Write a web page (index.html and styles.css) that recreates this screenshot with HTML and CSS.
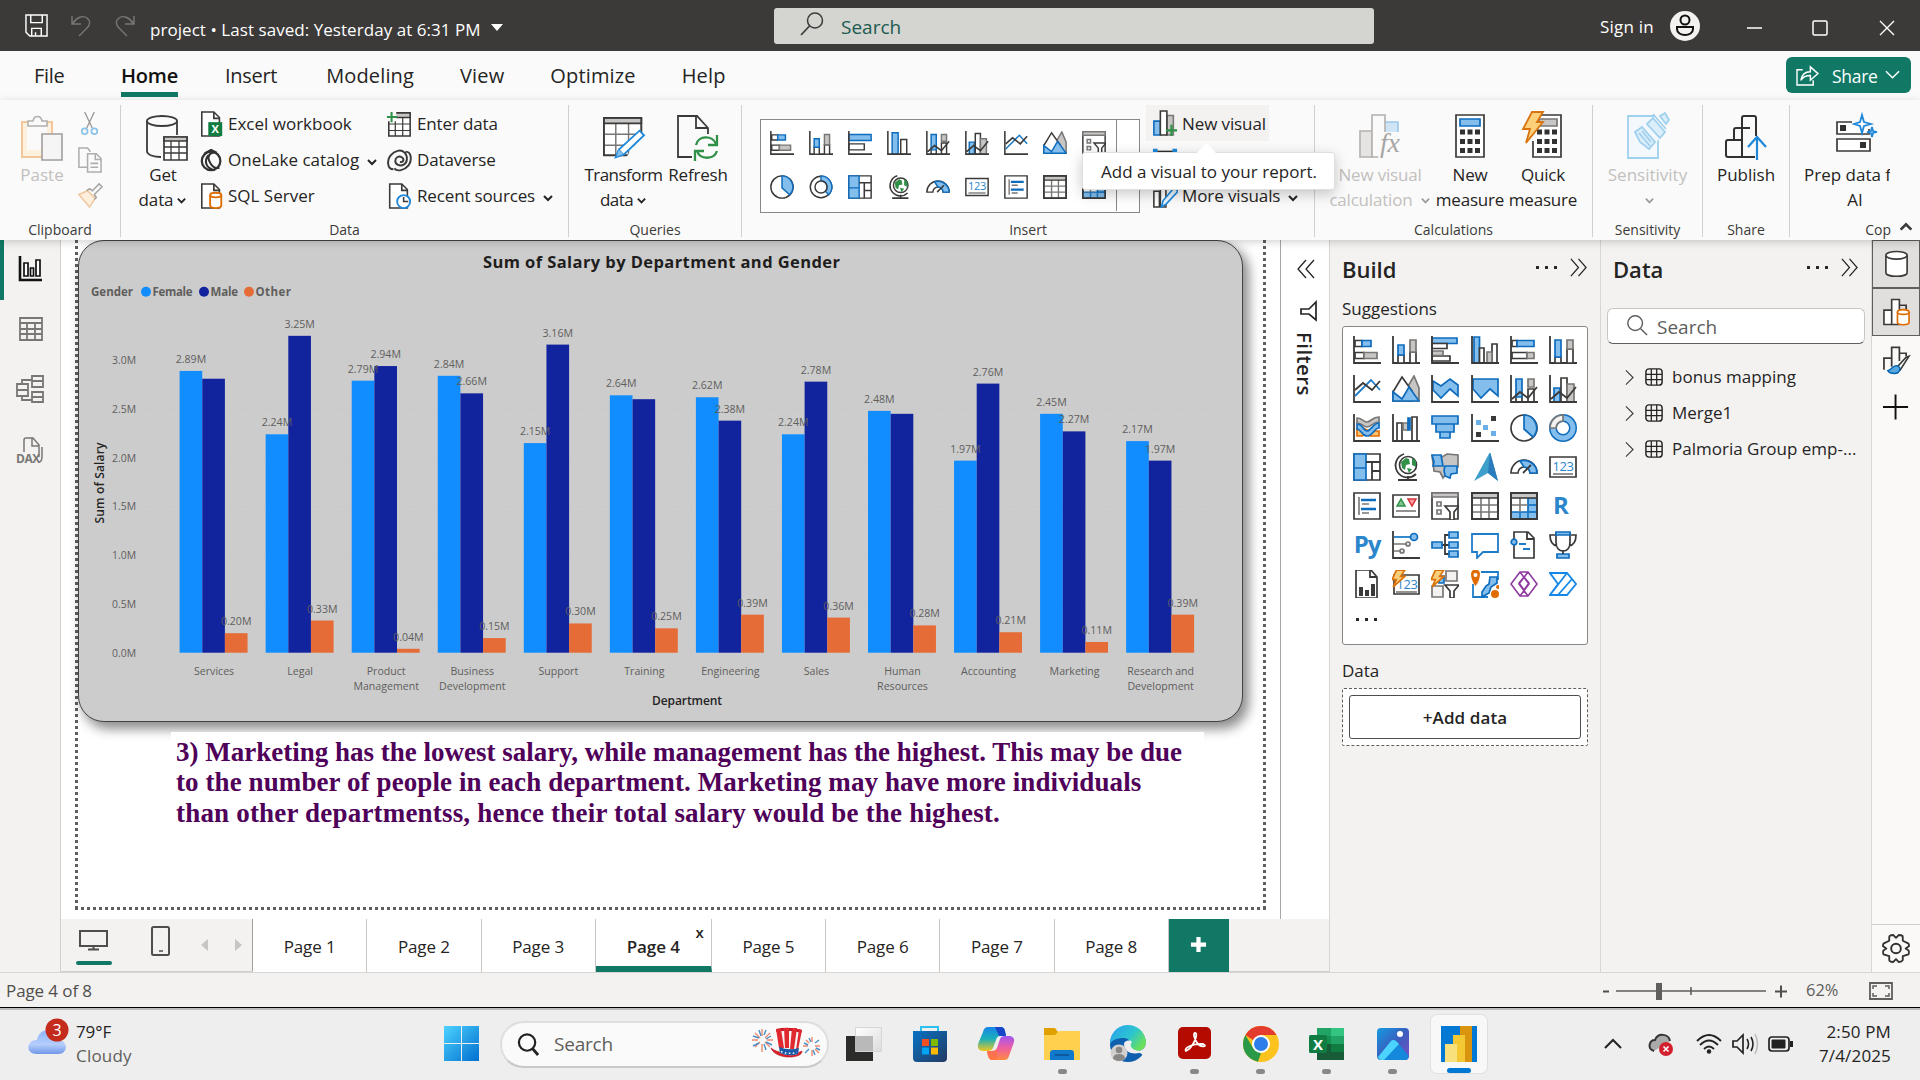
FILE: index.html
```html
<!DOCTYPE html>
<html lang="en">
<head>
<meta charset="utf-8">
<title>project - Power BI Desktop</title>
<link rel="stylesheet" href="styles.css">
</head>
<body>
<svg class="defs" aria-hidden="true">
  <symbol id="chev" viewBox="0 0 12 12"><path class="cv" d="M2 4l4 4 4-4"/></symbol>
  <symbol id="sbar" viewBox="0 0 28 28"><path class="k" d="M1 0v27h27"/><path class="w" d="M2 4.500h7v6h-7zM2 16.500h9v6h-9z"/><path class="b" d="M9 4.500h9v6H9z"/><path class="g" d="M11 16.500h13v6H11z"/></symbol>
  <symbol id="scol" viewBox="0 0 28 28"><path class="k" d="M1 0v27h27"/><path class="w" d="M6 19h6v8H6zM18 16h6v11h-6z"/><path class="b" d="M6 9h6v10H6z"/><path class="g" d="M18 4h6v12h-6z"/></symbol>
  <symbol id="cbar" viewBox="0 0 28 28"><path class="b" d="M1 2h25v5.500H1z"/><path class="w" d="M1 7.500h15v5H1zM1 20h18v5H1z"/><path class="g" d="M1 15h11v4.500H1z"/><path class="k" d="M1 0v27h27"/></symbol>
  <symbol id="cbar2" viewBox="0 0 28 28"><path class="b" d="M1 4h26v7H1z"/><path class="w" d="M1 15h18v7H1z"/><path class="k" d="M1 0v27h27"/></symbol>
  <symbol id="ccol" viewBox="0 0 28 28"><path class="b" d="M3 1h5.500v26H3z"/><path class="w" d="M8.500 12H13v15H8.500zM21 8h5v19h-5z"/><path class="g" d="M16 16h5v11h-5z"/><path class="k" d="M1 0v27h27"/></symbol>
  <symbol id="ccol2" viewBox="0 0 28 28"><path class="b" d="M6 2h7v25H6z"/><path class="w" d="M16 10h7v17h-7z"/><path class="k" d="M1 0v27h27"/></symbol>
  <symbol id="hbar" viewBox="0 0 28 28"><path class="k" d="M1 0v27h27"/><path class="w" d="M2 4.500h5v6H2zM2 16.500h15v6H2z"/><path class="b" d="M7 4.500h17v6H7z"/><path class="g" d="M17 16.500h7v6h-7z"/></symbol>
  <symbol id="hcol" viewBox="0 0 28 28"><path class="k" d="M1 0v27h27"/><path class="w" d="M6 21h6v6H6zM18 13h6v14h-6z"/><path class="b" d="M6 4h6v17H6z"/><path class="g" d="M18 4h6v9h-6z"/></symbol>
  <symbol id="line" viewBox="0 0 28 28"><path class="k" d="M1 0v27h27"/><path class="bl" d="M2 21L18 5l9 10"/><path class="k" d="M2 15l8-7 9 7 8-9"/></symbol>
  <symbol id="area" viewBox="0 0 28 28"><path class="g" d="M15 26V13l7-12 5 12v13z"/><path class="w" d="M1 26V17L10 2l10 14v10z"/><path class="b" d="M1 17l9 7 7-12 10 14H1z"/></symbol>
  <symbol id="sarea" viewBox="0 0 28 28"><path class="b" d="M2 6l8 5 9-7 8 6v11l-8-7-9 9-8-8z"/><path class="k" d="M1 0v27h27"/></symbol>
  <symbol id="harea" viewBox="0 0 28 28"><path class="b" d="M2 4h25v17l-8-7-9 9-8-9z"/><path class="k" d="M1 0v27h27"/></symbol>
  <symbol id="lcol" viewBox="0 0 28 28"><path class="w" d="M6 20h6v7H6zM18 14h6v13h-6z"/><path class="b" d="M6 4h6v18H6z"/><path class="g" d="M18 4h6v8h-6z"/><path class="k" d="M1 0v27h27M2 24l8-7 8 6 9-11"/></symbol>
  <symbol id="lcol2" viewBox="0 0 28 28"><path class="b" d="M5 13h6v14H5z"/><path class="w" d="M12 3h6v24h-6z"/><path class="g" d="M18 9h7v18h-7z"/><path class="k" d="M1 0v27h27M2 24l8-7 8 6 9-11"/></symbol>
  <symbol id="ribbon" viewBox="0 0 28 28"><path class="o" d="M4 14h6l6 3h10v5h-9l-4-2-4 2H4z"/><path class="g" d="M4 4c5 0 6 4 10 4s5-5 12-5v5c-6 0-8 5-12 5S9 9 4 9z"/><path class="b" d="M4 10c6 0 6 7 10 7s6-8 12-8v5c-5 0-6 8-12 8-5 0-5-6-10-7z"/><path class="k" d="M1 0v27h27"/></symbol>
  <symbol id="wfall" viewBox="0 0 28 28"><path class="w" d="M5 9h5v18H5zM20 3h5v24h-5z"/><path class="g" d="M11 9h5v7h-5z"/><path class="b db" d="M16 4h2v12h-2z"/><path class="k" d="M1 0v27h27"/></symbol>
  <symbol id="funnel" viewBox="0 0 28 28"><path class="b" d="M1 2h26v8H1zM5 10h18v8H5zM9 18h10v6H9z"/></symbol>
  <symbol id="scat" viewBox="0 0 28 28"><path class="k" d="M1 0v27h27"/><path fill="#3b3a39" d="M20 2h5v5h-5zM5 18h5v5H5z"/><path fill="#6aaeea" d="M5 6h5v5H5zM12 11h5v5h-5zM20 17h5v5h-5z"/></symbol>
  <symbol id="pie" viewBox="0 0 28 28"><circle class="w" cx="14" cy="14" r="13"/><path class="b" d="M14 1a13 13 0 0 1 9 22l-9-8z"/></symbol>
  <symbol id="donut" viewBox="0 0 28 28"><circle cx="14" cy="14" r="10" fill="none" stroke="#0f6cbd" stroke-width="8"/><circle cx="14" cy="14" r="10" fill="none" stroke="#83beec" stroke-width="5"/><path class="gw" d="M1 14A13 13 0 0 1 14 1v6a7 7 0 0 0-7 7z"/></symbol>
  <symbol id="donut2" viewBox="0 0 28 28"><circle class="w" cx="14" cy="14" r="12.500"/><path class="b" d="M14 1a13 13 0 0 1 9 22l-4-4a7 7 0 0 0-5-12z"/><circle class="w" cx="14" cy="14" r="7"/></symbol>
  <symbol id="tree" viewBox="0 0 28 28"><path class="w" d="M1 1h26v26H1z"/><path class="b" d="M1 1h12v14H1zM1 15h12v12H1z"/><path class="k" d="M13 9h14M19 9v18M19 18h8"/></symbol>
  <symbol id="globe" viewBox="0 0 28 28"><circle class="w" cx="16" cy="12" r="8.500"/><path fill="#309048" d="M9 9l5-4 3 1 1 5-4 1-1 5-3-2zM20 5l4 3v6l-4-2zM15 15l5 1-3 4z"/><path class="k" d="M12 1A12 12 0 1 0 24 21M6 27h19M16 23v4"/></symbol>
  <symbol id="map" viewBox="0 0 28 28"><path class="g" d="M1 3l10 1 5-3 11 1v12l-5 5-6 1-4 5-3-6-6-1-1-9z"/><path class="b" d="M1 2h9l2 11H2l1-4zM14 13h12v7l-6 1-1 4-5-2-1-6z"/></symbol>
  <symbol id="arrow" viewBox="0 0 28 28"><path fill="#3e9fca" d="M19-1l8 29-10-8-14 8z"/><path fill="#2b7cbd" d="M19-1l8 29-10-8z"/></symbol>
  <symbol id="gauge" viewBox="0 0 28 28"><path class="w" d="M1 20a13 13 0 0 1 26 0h-7a6 6 0 0 0-12 0z"/><path class="b" d="M10 8a13 13 0 0 1 17 12h-7a6 6 0 0 0-6-6z"/><path class="k" d="M13 20l8-8"/></symbol>
  <symbol id="card" viewBox="0 0 28 28"><path class="w" d="M1 4h26v20H1z"/><text x="14" y="18" class="num">123</text><path d="M4 21h20" class="gl"/></symbol>
  <symbol id="mcard" viewBox="0 0 28 28"><path class="w" d="M1 1h26v26H1z"/><path class="gl" d="M6 5v18M9 12h7M9 21h7"/><path class="bt" d="M8 8h15M8 17h15"/></symbol>
  <symbol id="kpi" viewBox="0 0 28 28"><path class="w" d="M1 3h26v22H1z"/><path d="M5 14l4-7 4 7z" fill="#7fc68f" stroke="#309048" stroke-width="1.500"/><path d="M16 7h8l-4 7z" fill="#ff9aa0" stroke="#d13438" stroke-width="1.500"/><path class="gl" d="M4 19h20"/></symbol>
  <symbol id="slicer" viewBox="0 0 28 28"><path class="w" d="M1 1h26v26H1z"/><path class="g" d="M1 1h26v4H1z"/><path class="gw" d="M6 10h4v4H6zM6 18h4v4H6z"/><path class="w" d="M14 14h14l-5 6v8h-4v-8z"/></symbol>
  <symbol id="table" viewBox="0 0 28 28"><path class="w" d="M1 1h26v26H1z"/><path class="gl" d="M10 5v22M18 5v22M1 13h26M1 20h26"/><path class="g dk" d="M1 1h26v5H1z"/><path class="k" d="M1 1h26v26H1z"/></symbol>
  <symbol id="matrix" viewBox="0 0 28 28"><path class="w" d="M1 1h26v26H1z"/><path class="b" d="M18 6h9v21H1v-7h17z"/><path class="bl" d="M10 20v7M18 20v7M18 13h9M18 20h9"/><path class="gl" d="M10 6v14M1 13h17"/><path class="g dk" d="M1 1h26v5H1z"/><path class="k" d="M1 1h26v26H1z"/></symbol>
  <symbol id="key" viewBox="0 0 28 28"><path class="k" d="M1 0v27h27"/><path class="bl" d="M2 6h17"/><circle class="b" cx="22" cy="6" r="3.500"/><path class="gl" d="M2 13h12M2 20h6"/><circle class="gw" cx="16" cy="13" r="2"/><circle class="gw" cx="10" cy="20" r="2"/></symbol>
  <symbol id="decomp" viewBox="0 0 28 28"><path class="k" d="M10 14h4M18 4h-4v19h4M14 14h4"/><path class="b" d="M1 11h10v6H1zM18 1h9v6h-9zM18 11h9v6h-9zM18 20h9v6h-9z"/></symbol>
  <symbol id="qa" viewBox="0 0 28 28"><path class="bl nw" d="M1 3h26v18H12l-6 6v-6H1z"/></symbol>
  <symbol id="narr" viewBox="0 0 28 28"><path class="w" d="M4 1h14l6 6v20H4z"/><path class="k" d="M17 1v7h7"/><path class="bl" d="M9 13h7M13 18h7"/><circle class="b" cx="4" cy="11" r="2.800"/></symbol>
  <symbol id="trophy" viewBox="0 0 28 28"><path class="w" d="M6 4H1c0 7 2 10 7 11M22 4h5c0 7-2 10-7 11M7 2h14v9c0 6-3 9-7 9s-7-3-7-9z"/><path class="b" d="M7 1h14v3H7zM8 23h12v4H8z"/><path class="k" d="M14 19v4"/></symbol>
  <symbol id="prep" viewBox="0 0 28 28"><path class="w" d="M3 0h15l6 7v21H3z"/><path class="k" d="M17 0v7h7"/><path fill="#3b3a39" d="M6 17h4v9H6zM12 20h4v6h-4zM18 14h4v12h-4z"/></symbol>
  <symbol id="bolt" viewBox="0 0 14 18"><path d="M5 1h8l-4 6h4L2 17l3-7H1z" fill="#fcd07b" stroke="#d9730d" stroke-width="1.600"/></symbol>
  <symbol id="bcard" viewBox="0 0 28 28"><path class="w" d="M2 5h25v19H2z"/><text x="15" y="19" class="num">123</text><path class="gl" d="M4 22h21"/><use href="#bolt" x="-1" y="-1" width="15" height="19"/></symbol>
  <symbol id="bslicer" viewBox="0 0 28 28"><path class="gw" d="M15 1h11v10H15zM1 16h11v11H1z"/><path class="b" d="M8 6h5v7H8z"/><path class="w" d="M14 15h14l-5 6v7h-4v-7z"/><use href="#bolt" x="-1" y="-1" width="15" height="19"/></symbol>
  <symbol id="azmap" viewBox="0 0 28 28"><path class="bl" d="M10 2h17v8M2 14v13h15"/><path class="b" d="M19 7h7v6l-6 4-2 6-7 4v-5l4-6 3-2z"/><path fill="#e06c00" d="M0 4a4.500 4.500 0 0 1 9 0c0 4-2 9-4.500 12C2 13 0 8 0 4z"/><circle cx="4.500" cy="5" r="2" fill="#fff"/><circle cx="24" cy="24" r="4" fill="#e06c00"/><circle cx="27" cy="17" r="2" fill="#e06c00"/></symbol>
  <symbol id="papps" viewBox="0 0 28 28"><path d="M10 2L1 14l9 12h8l9-12-9-12zM14 7l5 6-5 7-5-7zM18 2l-9 12 9 12M10 2l9 12-9 12" fill="none" stroke="#8e3a9e" stroke-width="1.600"/></symbol>
  <symbol id="pauto" viewBox="0 0 28 28"><path d="M1 3h17l9 11-9 11H1l8-11zM1 25L18 3M9 25L23 9" fill="none" stroke="#1487e8" stroke-width="1.800"/></symbol>
  <symbol id="colplus" viewBox="0 0 28 28"><path class="b" d="M2 12h7v15H2z"/><path class="g" d="M16 6h7v21h-7z"/><path class="w" d="M9 1h7v26H9z"/><path d="M21 16v12M15 22h12" stroke="#309048" stroke-width="2.400"/></symbol>
  <symbol id="colpen" viewBox="0 0 28 28"><path class="w" d="M2 10h6v17H2zM9 1h6v26H9z"/><path d="M10 27l2-7L24 6l4 4-13 14z" fill="#e9f4fc" stroke="#1f88d9" stroke-width="1.800"/></symbol>
  <symbol id="doc" viewBox="0 0 28 28"><path class="w" d="M3 1h13l6 6v20H3z"/><path class="k" d="M16 1v7h6"/></symbol>
  <symbol id="cyl" viewBox="0 0 28 28"><path class="w" d="M3 5v18c0 5 22 5 22 0V5"/><ellipse class="w" cx="14" cy="5" rx="11" ry="4"/></symbol>
  <symbol id="dbl" viewBox="0 0 20 20"><path d="M2 1l8 9-8 9M10 1l8 9-8 9" fill="none" stroke="#252423" stroke-width="1.300"/></symbol>
  <symbol id="mag" viewBox="0 0 24 24"><circle cx="10" cy="10" r="8" fill="none" stroke="currentColor" stroke-width="1.600"/><path d="M16 16l7 7" stroke="currentColor" stroke-width="1.600"/></symbol>
  <symbol id="fld" viewBox="0 0 20 20"><rect x="1" y="1" width="18" height="18" rx="3.500" fill="none" stroke="#252423" stroke-width="1.600"/><path d="M7 1v18M13 1v18M1 7h18M1 13h18" stroke="#252423" stroke-width="1.400"/></symbol>
  <symbol id="right" viewBox="0 0 10 18"><path d="M1 1l8 8-8 8" fill="none" stroke="#3b3a39" stroke-width="1.200"/></symbol>
</svg>

<header class="titlebar">
  <svg class="t-save" viewBox="0 0 24 24"><path d="M1 1h22v22H5l-4-4zM6 1v8h12V1M7 23v-8h10v8M11 19v4" fill="none" stroke="#fff" stroke-width="1.500"/></svg>
  <svg class="t-undo" viewBox="0 0 20 22"><path d="M1 1v8h9M1 9C6 2 12 0 16 3s3 7 0 10l-8 8" fill="none" stroke="#797775" stroke-width="1.400"/></svg>
  <svg class="t-redo" viewBox="0 0 20 22"><path d="M19 1v8h-9M19 9C14 2 8 0 4 3s-3 7 0 10l8 8" fill="none" stroke="#797775" stroke-width="1.400"/></svg>
  <span class="t-name">project • Last saved: Yesterday at 6:31 PM</span>
  <i class="caret"></i>
  <div class="t-search"><svg viewBox="0 0 24 24"><circle cx="15" cy="8.500" r="7.500" fill="none" stroke="#3b3a39" stroke-width="1.500"/><path d="M9.500 14L1 23" stroke="#3b3a39" stroke-width="1.700"/></svg><span>Search</span></div>
  <span class="t-sign">Sign in</span>
  <svg class="t-user" viewBox="0 0 30 30"><circle cx="15" cy="15" r="15" fill="#f3f2f1"/><circle cx="15" cy="9" r="4.500" fill="none" stroke="#111" stroke-width="2"/><path d="M7 16h16v2c0 8-16 8-16 0z" fill="none" stroke="#111" stroke-width="2"/></svg>
  <svg class="t-win" viewBox="0 0 150 18"><path d="M1 9h15M134 2l14 14M148 2l-14 14" stroke="#fff" stroke-width="1.400"/><rect x="67" y="2" width="14" height="14" rx="1.500" fill="none" stroke="#fff" stroke-width="1.500"/></svg>
</header>

<nav class="menu">
  <a>File</a><a class="on">Home</a><a>Insert</a><a>Modeling</a><a>View</a><a>Optimize</a><a>Help</a>
  <button class="share"><svg viewBox="0 0 24 22"><path d="M7 5H1v16h17v-5M5 16c1-6 5-9 10-9V2l8 7-8 7v-5c-5 0-8 2-10 5z" fill="none" stroke="#fff" stroke-width="1.500"/></svg><span>Share</span><svg class="sc" viewBox="0 0 16 10"><path d="M1 1l7 7 7-7" fill="none" stroke="#fff" stroke-width="1.600"/></svg></button>
</nav>

<section class="ribbon">
  <div class="grp g-clip"><div class="body">
    <div class="big off"><svg viewBox="0 0 42 46"><path d="M1 7h30v35H1z" fill="#fdf0dc" stroke="#f2c79b" stroke-width="2"/><path d="M6 7h20v28H6z" fill="#fafafa"/><path d="M7 11V6h5c1-6 8-6 9 0h5v5z" fill="#fafafa" stroke="#b3b0ad" stroke-width="1.600"/><path d="M21 19h20v26H21z" fill="#f5f5f5" stroke="#a19f9d" stroke-width="1.600"/></svg><span>Paste</span></div>
    <div class="smalls">
      <svg viewBox="0 0 28 28"><path d="M9 2l8 17M19 2l-8 17" stroke="#979593" stroke-width="1.300"/><circle cx="9" cy="22" r="3" fill="none" stroke="#8cc3ea" stroke-width="1.800"/><circle cx="19" cy="22" r="3" fill="none" stroke="#8cc3ea" stroke-width="1.800"/></svg>
      <svg viewBox="0 0 28 28"><path d="M12 22H3V2h9l3 4M12 8h9l5 5v14H12zM20 8v6h6M15 18h8M15 22h8" fill="none" stroke="#b0aeac" stroke-width="1.600"/></svg>
      <svg viewBox="0 0 28 28"><path d="M3 13l9-4 8 8-6 9z" fill="#fdeedd" stroke="#f0c8a0" stroke-width="1.600"/><path d="M11 9l3-2 3 2 7-7 3 3-8 8 2 3-2 2" fill="none" stroke="#a8a6a4" stroke-width="1.600"/></svg>
    </div></div><h6>Clipboard</h6></div>

  <div class="grp g-data"><div class="body">
    <div class="big"><svg viewBox="0 0 42 46"><path class="k" d="M1 6v30c0 4 7 6 14 6M31 6v14"/><ellipse class="k" cx="16" cy="6" rx="15" ry="5"/><path class="w" d="M18 22h23v23H18z"/><path class="g dk" d="M18 22h23v4H18z"/><path class="k thin" d="M25 26v19M33 26v19M18 32h23M18 38h23"/></svg><span>Get<br>data<svg class="c"><use href="#chev"/></svg></span></div>
    <div class="col c1">
      <div><svg viewBox="0 0 28 28"><use href="#doc"/><path fill="#107c41" d="M10 12h15v15H10z"/><text x="17.500" y="24" class="xl">X</text></svg>Excel workbook</div>
      <div><svg viewBox="0 0 28 28"><circle cx="13" cy="15" r="10" fill="none" stroke="#323130" stroke-width="2.400"/><path d="M6 7l7-4 6 3c-8-1-10 4-8 9s6 9 11 7M10 9c-5 6-2 13 4 15" fill="none" stroke="#323130" stroke-width="2.200"/></svg>OneLake catalog <svg class="c"><use href="#chev"/></svg></div>
      <div><svg viewBox="0 0 28 28"><use href="#doc"/><path d="M12 13v11c0 4 12 4 12 0V13" fill="#fff" stroke="#e06c00" stroke-width="2"/><ellipse cx="18" cy="13" rx="6" ry="2.500" fill="#fff" stroke="#e06c00" stroke-width="2"/></svg>SQL Server</div>
    </div>
    <div class="col c2">
      <div><svg viewBox="0 0 28 28"><path class="w" d="M3 3h23v24H3z"/><path class="g dk" d="M8 2h18v5H8z"/><path class="k thin" d="M10 7v20M18 7v20M3 14h23M3 21h23"/><path fill="#fafafa" d="M0 0h11v11H0z"/><path d="M6 1v11M1 6.500h11" stroke="#309048" stroke-width="2.200"/></svg>Enter data</div>
      <div><svg viewBox="0 0 28 28"><path d="M8 24C1 24 1 14 5 9s11-7 15-3 3 11-1 13-9 0-9-4 4-6 7-4 2 6-2 5M21 5c7 0 7 10 3 15s-12 7-15 3" fill="none" stroke="#3b3a39" stroke-width="2.100"/></svg>Dataverse</div>
      <div><svg viewBox="0 0 28 28"><use href="#doc" x="1"/><circle cx="19" cy="20" r="7" fill="#fff" stroke="#1f88d9" stroke-width="2"/><path d="M19 15v5h5" fill="none" stroke="#3b3a39" stroke-width="1.700"/></svg>Recent sources <svg class="c"><use href="#chev"/></svg></div>
    </div></div><h6>Data</h6></div>

  <div class="grp g-q"><div class="body">
    <div class="big tr"><svg viewBox="0 0 46 46"><path class="w" d="M1 1h41v41H1z"/><path class="gl" d="M14 7v35M28 7v35M1 19h41M1 31h41"/><path class="g dk" d="M1 1h41v6H1z"/><path class="k" d="M1 1h41v41H1z"/><path d="M46 16v30H24z" fill="#fafafa"/><path d="M14 44l4-9 22-20 5 5-22 21z" fill="#fff" stroke="#1f88d9" stroke-width="2"/><path d="M14 44l3-9 6 6z" fill="#83beec" stroke="#1f88d9"/></svg><span>Transform<br>data<svg class="c"><use href="#chev"/></svg></span></div>
    <div class="big rf"><svg viewBox="0 0 42 46"><path class="k" d="M15 42H1V1h19l11 12v6"/><path class="k" d="M19 1v12h12"/><path d="M19 30c2-10 17-10 20-1M40 20v10h-9M40 36c-3 9-17 9-20 0M18 46V36h9" fill="none" stroke="#309048" stroke-width="2.300"/></svg><span>Refresh</span></div>
  </div><h6>Queries</h6></div>

  <div class="grp g-ins"><div class="body">
    <div class="gallery"><div class="gicons">
      <svg><use href="#sbar"/></svg><svg><use href="#scol"/></svg><svg><use href="#cbar2"/></svg><svg><use href="#ccol2"/></svg><svg><use href="#lcol"/></svg><svg><use href="#lcol2"/></svg><svg><use href="#line"/></svg><svg><use href="#area"/></svg><svg><use href="#slicer"/></svg>
      <svg><use href="#pie"/></svg><svg><use href="#donut2"/></svg><svg><use href="#tree"/></svg><svg><use href="#globe"/></svg><svg><use href="#gauge"/></svg><svg><use href="#card"/></svg><svg><use href="#mcard"/></svg><svg><use href="#table"/></svg><svg><use href="#matrix"/></svg>
    </div></div>
    <div class="col c3">
      <div class="hl"><svg><use href="#colplus"/></svg>New visual</div>
      <div><svg viewBox="0 0 28 28"><path d="M3 6h22" stroke="#323130" stroke-width="2"/><path fill="#1f88d9" d="M1 3h5v5H1zM22 3h5v5h-5z"/></svg></div>
      <div><svg><use href="#colpen"/></svg>More visuals <svg class="c"><use href="#chev"/></svg></div>
      <div class="tip">Add a visual to your report.</div>
    </div></div><h6>Insert</h6></div>

  <div class="grp g-calc"><div class="body">
    <div class="big nvc off"><svg viewBox="0 0 42 46"><path d="M1 17h12v26H1z" fill="#e5e4e3" stroke="#b3b0ad" stroke-width="1.600"/><path d="M25 8h14v14H25z" fill="#cfe4f5" stroke="#9cc9ea" stroke-width="1.600"/><path d="M13 1h13v42H13z" fill="#fafafa" stroke="#b3b0ad" stroke-width="1.600"/><path d="M20 18h22v28H19z" fill="#fafafa"/><text x="21" y="38" class="fx">fx</text></svg><span>New visual<br>calculation <svg class="c"><use href="#chev"/></svg></span></div>
    <div class="big nm"><svg viewBox="0 0 42 46"><path class="w" d="M7 1h28v42H7z"/><path class="b" d="M11 5h20v7H11z"/><path class="keys" d="M11 18h20M11 27.500h20M11 36.500h20"/></svg><span>New<br>measure</span></div>
    <div class="big qm"><svg viewBox="0 0 42 46"><path class="w" d="M11 1h28v42H11z"/><path class="g" d="M17 5h18v7H17z"/><path class="keys" d="M15 18h20M15 27.500h20M15 36.500h20"/><path d="M0 0h14v27H4z" fill="#fafafa"/><path d="M10-2h11l-6 10h6L4 29l4-14H1z" fill="#fcd07b" stroke="#d9730d" stroke-width="1.800"/></svg><span>Quick<br>measure</span></div>
  </div><h6>Calculations</h6></div>

  <div class="grp g-sens"><div class="body"><div class="big off"><svg viewBox="0 0 42 46"><path d="M31 24v19H1V1h27" fill="#f2f8fc" stroke="#9fd0ee" stroke-width="1.800"/><path d="M25 10l9 9-15 14-9 1 1-9z" fill="#f2f8fc" stroke="#f2f8fc" stroke-width="5"/><path d="M8 17l7-5 13 15-6 7-9-7zM12 18l11 13M15 16l9 11M20 9l6-6 12 14-5 6zM26-1l13 15M33 1l5-3 4 7-3 4z" fill="#dceefa" stroke="#9fd0ee" stroke-width="1.800"/></svg><span>Sensitivity<br><svg class="c"><use href="#chev"/></svg></span></div></div><h6>Sensitivity</h6></div>

  <div class="grp g-sh"><div class="body"><div class="big"><svg viewBox="0 0 42 46"><g fill="none" stroke="#323130" stroke-width="2"><path d="M9 25V15q0-2 2-2h14M17 13V3q0-2 2-2h10q2 0 2 2v18M17 25h-14q-2 0-2 2v13q0 2 2 2h27M17 42V13M17 28V25"/></g><path d="M32 45V22M23 32l9-10 9 10" fill="none" stroke="#1f88d9" stroke-width="2.200"/></svg><span>Publish</span></div></div><h6>Share</h6></div>

  <div class="grp g-prep"><div class="body"><div class="big"><svg viewBox="0 0 42 46"><path class="w" d="M18 7H3v12h32v-5M3 24h33v12H3z"/><path fill="#323130" d="M6 10h6v6H6zM26 27h6v6h-6z"/><path d="M28 0l2 7 7 2-7 2-2 7-2-7-6-2 6-2zM38 12l1 4 4 1-4 1-1 4-1-4-4-1 4-1z" fill="#fafafa" stroke="#1f88d9" stroke-width="1.800"/></svg><span class="clip">Prep data f</span><span>AI</span></div></div><h6>Cop <svg class="c up"><use href="#chev"/></svg></h6></div>
</section>

<main class="work">
  <aside class="rail">
    <svg class="on" viewBox="0 0 26 26"><path d="M2 0v24h22" fill="none" stroke="#111" stroke-width="2.600"/><path d="M6 7h4v13H6zM12.500 12h3v8h-3zM18 4h4v16h-4z" fill="#fff" stroke="#111" stroke-width="1.700"/></svg>
    <svg viewBox="0 0 26 26"><path d="M2 2h22v22H2zM2 7h22M2 13h22M2 18h22M9 7v17M17 7v17" fill="none" stroke="#797775" stroke-width="1.800"/></svg>
    <svg class="wd" viewBox="0 0 28 28"><path d="M1 9h11v12H1zM1 15h11M16 1h11v11H16zM16 6h11M16 17h11v10H16zM16 22h11M6 9V5h10M6 21v4h10" fill="none" stroke="#797775" stroke-width="1.800"/></svg>
    <svg class="wd" viewBox="0 0 28 28"><path d="M8 15V3q0-2 2-2h7l6 7v12M16 1v8h7M26 10v9q0 6-3 6" fill="none" stroke="#797775" stroke-width="1.500"/><text x="0" y="26" class="dax">DAX</text></svg>
  </aside>

  <div class="center">
    <div class="canvas-row">
      <div class="canvas"><div class="page">
        <svg class="chart" id="chart" viewBox="79 241 1163 480"></svg>
        <p class="note">3) Marketing has the lowest salary, while management has the highest. This may be due<br><span class="n2">to the number of people in each department. Marketing may have more individuals</span><br><span class="n3">than other departmentss, hence their total salary would be the highest.</span></p>
      </div></div>
      <aside class="filters">
        <svg class="flip"><use href="#dbl"/></svg>
        <svg class="ff" viewBox="0 0 18 20"><path d="M17 1v18l-7-6H2V8h8z" fill="none" stroke="#252423" stroke-width="1.700"/></svg>
        <span>Filters</span>
      </aside>
    </div>
    <div class="tabs">
      <div class="views">
        <svg class="v1" viewBox="0 0 36 50"><path d="M4 12h27v15H4zM17.500 27v3M12 30.500h11" fill="none" stroke="#504e4c" stroke-width="2"/><rect y="42" width="36" height="4" rx="2" fill="#117865"/></svg>
        <svg class="v2" viewBox="0 0 20 30"><rect x="1" y="1" width="17" height="28" rx="1.500" fill="none" stroke="#504e4c" stroke-width="2"/><path d="M8 25h4" stroke="#504e4c" stroke-width="1.500"/></svg>
        <svg class="v3" viewBox="0 0 42 12"><path d="M7 0v12L0 6zM34 0v12l7-6z" fill="#c8c6c4"/></svg>
      </div>
      <a>Page 1</a><a>Page 2</a><a>Page 3</a><a class="on">Page 4<i>x</i></a><a>Page 5</a><a>Page 6</a><a>Page 7</a><a>Page 8</a><a class="add"><svg viewBox="0 0 18 18"><path d="M9 1v16M1 9h16" stroke="#fff" stroke-width="4.500"/></svg></a>
    </div>
  </div>

  <aside class="pane build">
    <header><h2>Build</h2><i class="dots"></i><svg><use href="#dbl"/></svg></header>
    <label>Suggestions</label>
    <div class="vis">
      <svg><use href="#sbar"/></svg><svg><use href="#scol"/></svg><svg><use href="#cbar"/></svg><svg><use href="#ccol"/></svg><svg><use href="#hbar"/></svg><svg><use href="#hcol"/></svg>
      <svg><use href="#line"/></svg><svg><use href="#area"/></svg><svg><use href="#sarea"/></svg><svg><use href="#harea"/></svg><svg><use href="#lcol"/></svg><svg><use href="#lcol2"/></svg>
      <svg><use href="#ribbon"/></svg><svg><use href="#wfall"/></svg><svg><use href="#funnel"/></svg><svg><use href="#scat"/></svg><svg><use href="#pie"/></svg><svg><use href="#donut"/></svg>
      <svg><use href="#tree"/></svg><svg><use href="#globe"/></svg><svg><use href="#map"/></svg><svg><use href="#arrow"/></svg><svg><use href="#gauge"/></svg><svg><use href="#card"/></svg>
      <svg><use href="#mcard"/></svg><svg><use href="#kpi"/></svg><svg><use href="#slicer"/></svg><svg><use href="#table"/></svg><svg><use href="#matrix"/></svg><b class="r">R</b>
      <b>Py</b><svg><use href="#key"/></svg><svg><use href="#decomp"/></svg><svg><use href="#qa"/></svg><svg><use href="#narr"/></svg><svg><use href="#trophy"/></svg>
      <svg><use href="#prep"/></svg><svg><use href="#bcard"/></svg><svg><use href="#bslicer"/></svg><svg><use href="#azmap"/></svg><svg><use href="#papps"/></svg><svg><use href="#pauto"/></svg>
      <i class="dots"></i>
    </div>
    <label class="l2">Data</label>
    <div class="drop"><div>+Add data</div></div>
  </aside>

  <aside class="pane data">
    <header><h2>Data</h2><i class="dots"></i><svg><use href="#dbl"/></svg></header>
    <div class="dsearch"><svg><use href="#mag"/></svg><span>Search</span></div>
    <div class="row"><svg class="r"><use href="#right"/></svg><svg class="f"><use href="#fld"/></svg>bonus mapping</div>
    <div class="row"><svg class="r"><use href="#right"/></svg><svg class="f"><use href="#fld"/></svg>Merge1</div>
    <div class="row"><svg class="r"><use href="#right"/></svg><svg class="f"><use href="#fld"/></svg>Palmoria Group emp-...</div>
  </aside>

  <aside class="rrail">
    <div class="sel"><svg><use href="#cyl"/></svg></div>
    <div class="sel"><svg viewBox="0 0 28 28"><path class="w" d="M1 12h8v15H1zM9 1h8v26H9z"/><path class="k" d="M17 7h7v4"/><path d="M15 14v11c0 3 12 3 12 0V14" fill="#fff" stroke="#e06c00" stroke-width="1.700"/><ellipse cx="21" cy="14" rx="6" ry="2.500" fill="#fff" stroke="#e06c00" stroke-width="1.700"/></svg></div>
    <div><svg viewBox="0 0 28 28"><path class="k" d="M1 24V12h8v9M9 12V1h8v14M17 7h7v3"/><path class="w" d="M27 10l-9 14-3-3 9-10z"/><path d="M5 25c5-1 5-6 10-5 5 2 2 8-3 8-3 0-6-1-7-3z" fill="#5aa7e0" stroke="#0063b1" stroke-width="1.400"/></svg></div>
    <div><svg viewBox="0 0 28 28"><path d="M13 0v26M0 13h26" stroke="#111" stroke-width="2"/></svg></div>
    <div class="gear"><svg viewBox="0 0 30 30"><circle cx="15" cy="15" r="5" fill="none" stroke="#323130" stroke-width="2"/><path d="M15 4l3-3q4 0 4 2v4l6 3q1 2 0 3l-3 2 3 2q1 2 0 4l-6 2v4q-1 2-4 2l-3-3-3 3q-4 0-4-2v-4l-6-2q-1-2 0-4l3-2-3-2q-1-1 0-3l6-3V3q0-2 4-2z" fill="none" stroke="#323130" stroke-width="1.900" stroke-linejoin="round"/></svg></div>
  </aside>
</main>

<footer class="status"><span>Page 4 of 8</span>
  <svg class="zoom" viewBox="0 0 190 24"><path d="M3 12.500h6M175 12.500h12M181 6.500v12" stroke="#504e4c" stroke-width="2"/><path d="M16 12h150M91 8v8" stroke="#605e5c" stroke-width="1.600"/><rect x="56" y="4" width="6" height="17" fill="#605e5c"/></svg>
  <span class="pct">62%</span>
  <svg class="fit" viewBox="0 0 24 18"><path d="M1 1h22v16H1z" fill="none" stroke="#605e5c" stroke-width="1.800"/><path d="M4 7V4h4M16 4h4v3M20 11v3h-4M8 14H4v-3" fill="none" stroke="#605e5c" stroke-width="1.500"/></svg>
</footer>

<footer class="task">
  <div class="weather">
    <svg viewBox="0 0 46 40"><defs><linearGradient id="cl" x2="0" y2="1"><stop stop-color="#8fb4ff"/><stop offset=".6" stop-color="#b4cdfb"/><stop offset="1" stop-color="#7097e8"/></linearGradient></defs><path d="M9 35c-12 0-11-14 0-14 2-13 19-13 21 0 10 0 11 14 0 14z" fill="url(#cl)"/><circle cx="29" cy="11" r="11.500" fill="#c42b1c"/><text x="29" y="16.500" class="bdg">3</text></svg>
    <div>79°F<br><em>Cloudy</em></div>
  </div>
  <svg class="win" viewBox="0 0 36 36"><defs><linearGradient id="wn" x2="1" y2="1"><stop stop-color="#4dd2ff"/><stop offset="1" stop-color="#006fcf"/></linearGradient></defs><path d="M0 0h17v17H0zM18 0h17v17H18zM0 18h17v17H0zM18 18h17v17H18z" fill="url(#wn)"/></svg>
  <div class="pill"><svg class="m" viewBox="0 0 24 24"><circle cx="10.500" cy="10" r="8.500" fill="none" stroke="#222" stroke-width="2.300"/><path d="M16 16l6 7" stroke="#222" stroke-width="3"/></svg><span>Search</span>
    <svg class="hat" viewBox="0 0 70 34"><g stroke-width="1.400" fill="none"><path stroke="#ef8a70" d="M1 13h6M16 13h6M11 2v7M11 17v8M4 6l5 5M14 15l5 5M19 6l-5 5M9 15l-5 5"/><path stroke="#4a90c8" d="M2 9l6 2M15 15l6 3M8 3l2 6M13 17l2 6M20 9l-5 3M8 16l-6 3M15 3l-2 5"/><path stroke="#ef8a70" d="M52 19h5M64 19h5M61 10v5M61 23v6M55 13l3 3M64 22l4 4"/><path stroke="#4a90c8" d="M68 13l-4 3M58 22l-4 4M53 16l4 2M65 21l4 2M58 11l2 4M62 23l2 5"/></g><path d="M20 21c6 5 22 8 31 3 1 8-27 9-31-3z" fill="#d81e28" stroke="#b01018" stroke-width=".6"/><path d="M25 2q12-3 26 1l-4 24q-9 3-18-1z" fill="#f4f4f4"/><path d="M25 2q12-3 26 1l-.6 3q-12-4-25-1z" fill="#c81824"/><path d="M25 2h5l3 19h-5zM33 1h5v20h-4zM41 1h5l-3 21h-4zM48 2l3 1-4 20h-2z" fill="#e02a30"/><path d="M28 20q10 4 20 1l-1 6q-9 3-18-1z" fill="#185aa8"/><path d="M30 24.500q8 3 16 1" stroke="#fff" stroke-width="1.500" stroke-dasharray="1.500 2.500" fill="none"/></svg></div>
  <div class="apps">
    <div><svg viewBox="0 0 36 36"><defs><linearGradient id="tv" x2="1" y2="1"><stop stop-color="#fff"/><stop offset="1" stop-color="#dcdcdc"/></linearGradient></defs><path d="M0 10h27v25H0z" fill="#2c2c2b"/><path d="M9.500 1.500h26v24h-26z" fill="url(#tv)" stroke="#d6d6d6"/><path d="M9 10h18v15H9z" fill="#b9b9b9"/></svg></div>
    <div><svg viewBox="0 0 36 36"><defs><linearGradient id="st" x2="1" y2="1"><stop stop-color="#0873c4"/><stop offset="1" stop-color="#243a63"/></linearGradient></defs><path d="M9 6V1h17v5" fill="none" stroke="#2bc0f0" stroke-width="2"/><path d="M1 5h34v27q0 4-4 4H5q-4 0-4-4z" fill="url(#st)"/><path d="M10 13h7v7h-7z" fill="#f25022"/><path d="M19 13h7v7h-7z" fill="#7fba00"/><path d="M10 21.500h7v7h-7z" fill="#00a4ef"/><path d="M19 21.500h7v7h-7z" fill="#ffb900"/></svg></div>
    <div><svg viewBox="0 0 36 36"><defs><linearGradient id="c1" x2="0" y2="1"><stop stop-color="#1686e8"/><stop offset=".5" stop-color="#1cb0b8"/><stop offset="1" stop-color="#f0c820"/></linearGradient><linearGradient id="c2" x2="0" y2="1"><stop stop-color="#a055f0"/><stop offset=".5" stop-color="#ee5fa0"/><stop offset="1" stop-color="#ff8a3c"/></linearGradient></defs><path d="M10 1h13q3 0 4 4l1 5h-6q-3 0-4 4l-3 8q-1 3-5 3H4q-5-1-4-7L5 6q1-5 5-5z" fill="url(#c1)"/><path d="M17 1h6q3 0 4 4l1 5h-7z" fill="#1746c8"/><path d="M26 34H14q-4 0-5-9h5q4 0 5-3l3-9q1-3 5-3h5q5 1 4 6l-5 14q-1 4-5 4z" fill="url(#c2)"/><path d="M19 34h-5q-4 0-5-9h5q4 0 5-3z" fill="#ff7043" opacity=".7"/></svg></div>
    <div class="run"><svg viewBox="0 0 36 36"><path d="M0 2h11l3 4h2v6H0z" fill="#e0a100"/><path d="M0 9h11l4-4h21v29H0z" fill="#ffd04d"/><path d="M6 34v-7q0-3 3-3h18q3 0 3 3v7z" fill="#1079cc"/><path d="M11 29h14" stroke="#0b4f8e" stroke-width="1.500"/></svg></div>
    <div><svg viewBox="0 0 36 36"><defs><linearGradient id="e1" x2="1" y2=".6"><stop stop-color="#2a9df0"/><stop offset=".6" stop-color="#2cc5d0"/><stop offset="1" stop-color="#6be05a"/></linearGradient></defs><circle cx="18" cy="18" r="18" fill="#0e5fae"/><path d="M0 18a18 18 0 0 1 36-2c0 6-4 9-9 9-6 0-9-3-7-6 1-3-1-7-6-7C7 12 2 14 0 18z" fill="url(#e1)"/><path d="M36 16c0 6-4 9-9 9l6 4 6-6z" fill="#eee"/><path d="M14 18c0-3 6-5 8-2-4 5 2 10 12 9-6 4-20 4-20-7z" fill="#eee"/><circle cx="9" cy="27" r="8.500" fill="#d2d0ce"/><circle cx="9" cy="24" r="3.300" fill="#8a8886"/><path d="M3 33q0-5 6-5t6 5q-6 4-12 0z" fill="#8a8886"/></svg></div>
    <div class="run"><svg viewBox="0 0 36 36"><rect x="1" y="1" width="33" height="32" rx="5" fill="#b30b00"/><path d="M9 25c-3-3 8-8 17-7 5 2-1 4-5 0-4-5-5-11-3-11 4 0-2 15-9 18z" fill="none" stroke="#fff" stroke-width="1.800"/></svg></div>
    <div class="run"><svg viewBox="0 0 36 36"><circle cx="18" cy="18" r="18" fill="#fcc31e"/><path d="M2.400 9A18 18 0 0 1 33.600 9H18l-8 5z" fill="#e33b2e"/><path d="M2.400 9l8 13.500L18 27l-3 8.700A18 18 0 0 1 2.400 9z" fill="#2a9a48"/><circle cx="18" cy="18" r="9" fill="#fff"/><circle cx="18" cy="18" r="7" fill="#2f7de9"/></svg></div>
    <div class="run"><svg viewBox="0 0 36 36"><path d="M8 2h27v32H8z" fill="#185c37"/><path d="M8 2h14v8H8z" fill="#21a366"/><path d="M22 2h13v8H22z" fill="#33c481"/><path d="M8 10h14v8H8z" fill="#159050"/><path d="M22 10h13v8H22z" fill="#21a366"/><path d="M22 18h13v8H22z" fill="#107c41"/><rect y="9" width="18" height="18" rx="1.500" fill="#107c41"/><text x="9" y="23.500" class="xl big-x">X</text></svg></div>
    <div class="run"><svg viewBox="0 0 36 36"><defs><linearGradient id="ph" x2="1" y2="1"><stop stop-color="#149be0"/><stop offset=".5" stop-color="#3a5fc0"/><stop offset="1" stop-color="#7a4fc0"/></linearGradient></defs><rect x="2" y="2" width="32" height="32" rx="4" fill="url(#ph)"/><path d="M3 31l13-16q2-2 5 0l13 15q-1 4-4 4H6q-2 0-3-3z" fill="#1489dc"/><path d="M3 31l13-16q2-2 5 0l3 3L9 34H6q-2 0-3-3z" fill="#4cd4ff"/><circle cx="25" cy="8" r="3" fill="#fff"/></svg></div>
    <div class="run act"><svg viewBox="0 0 36 36"><path d="M0 0h36v36H0z" fill="#0078d4"/><path d="M19 0h12v36H19z" fill="#d9950f"/><path d="M12 9h12v27H12z" fill="#f3c833"/><path d="M4 18h12v18H4z" fill="#f8e07c"/></svg></div>
  </div>
  <svg class="tray" viewBox="0 0 190 36"><path d="M5 22l8-8 8 8" fill="none" stroke="#222" stroke-width="2"/><path d="M54 25c-7-2-5-11 1-11 3-8 14-6 15 1" fill="#aaa" stroke="#333" stroke-width="2"/><circle cx="66" cy="23" r="7" fill="#d3202e"/><path d="M63.500 20.500l5 5M68.500 20.500l-5 5" stroke="#fff" stroke-width="1.600"/><g fill="none" stroke="#222" stroke-width="1.800"><path d="M97 15q12-12 24 0M100 19q9-9 18 0M104 23q5-5 10 0"/></g><circle cx="109" cy="25.500" r="2.200" fill="#222"/><path d="M133 15h4l6-6v18l-6-6h-4z" fill="none" stroke="#222" stroke-width="1.700"/><path d="M147 13q3 5 0 10M151 11q4 7 0 14" fill="none" stroke="#222" stroke-width="1.600"/><path d="M155 8q5 10 0 20" fill="none" stroke="#bbb" stroke-width="1.500"/><rect x="169" y="11" width="20" height="14" rx="3" fill="none" stroke="#222" stroke-width="1.700"/><rect x="171.500" y="13.500" width="14" height="9" rx="1" fill="#222"/></svg>
  <i class="nub"></i>
  <div class="clock">2:50 PM<br>7/4/2025</div>
</footer>
<script src="chart.js"></script>
</body>
</html>
```
FILE: styles.css
```css
* { box-sizing: border-box; }
body { margin: 0; width: 1920px; height: 1080px; overflow: hidden; font: 17px/24px "Open Sans", "Noto Sans", sans-serif; color: #252423; background: #fafafa; display: flex; flex-direction: column; }
svg { display: block; flex: none; overflow: visible; }
.defs { position: absolute; width: 0; height: 0; }
h2, h6, p { margin: 0; }

/* icon strokes */
.k { fill: none; stroke: #3b3a39; stroke-width: 1.8; }
.thin { stroke-width: 1.3; }
.w { fill: #fff; stroke: #3b3a39; stroke-width: 1.7; }
.b { fill: #83beec; stroke: #0f6cbd; stroke-width: 1.7; }
.db { fill: #0f6cbd; }
.bl { fill: none; stroke: #1f7cc8; stroke-width: 1.8; }
.nw { fill: #fff; }
.bt { stroke: #0f6cbd; stroke-width: 2.6; }
.g { fill: #c8c6c4; stroke: #797775; stroke-width: 1.7; }
.dk { stroke: #3b3a39; }
.gw { fill: #f3f2f1; stroke: #797775; stroke-width: 1.7; }
.gl { fill: none; stroke: #797775; stroke-width: 1.6; }
.o { fill: #fcc36f; stroke: #e06c00; stroke-width: 1.6; }
.cv { fill: none; stroke: currentColor; stroke-width: 2; }
.keys { stroke: #323130; stroke-width: 5; stroke-dasharray: 5 2.5; }
.num { font-size: 13px; fill: #2c86cc; text-anchor: middle; letter-spacing: -0.4px; }
.xl { font-size: 12px; font-weight: 700; fill: #fff; text-anchor: middle; }
.big-x { font-size: 15px; }
.fx { font: italic 28px "Liberation Serif", serif; fill: #a8a6a4; }
.dax { font-size: 12px; font-weight: 700; fill: #797775; letter-spacing: -0.5px; }
.bdg { font-size: 16px; fill: #fff; text-anchor: middle; }

/* title bar */
.titlebar { height: 51px; flex: none; background: #3b3a39; color: #fff; display: flex; align-items: center; padding: 0 24px 0 25px; }
.t-save { width: 23px; height: 23px; }
.t-undo { width: 20px; height: 22px; margin-left: 23px; }
.t-redo { width: 20px; height: 22px; margin-left: 24px; }
.t-name { margin: 9px 0 0 15px; width: 341px; white-space: nowrap; letter-spacing: 0.05px; }
.caret { border: 6.5px solid transparent; border-top: 7px solid #fff; border-bottom: 0; margin: 4px 0 0 0; }
.t-search { margin: 1px 0 0 271px; width: 600px; height: 36px; border-radius: 3px; background: #d4d4d1; color: #1b5b4f; font-size: 19px; display: flex; align-items: center; gap: 17px; padding-left: 26px; }
.t-search svg { width: 24px; height: 24px; margin-top: -4px; }
.t-search span { margin-top: 2px; }
.t-sign { margin: 2px 0 0 226px; width: 70px; white-space: nowrap; letter-spacing: 0.2px; }
.t-user { width: 30px; height: 30px; }
.t-win { width: 150px; height: 18px; margin: 4px 0 0 46px; }

/* menu */
.menu { height: 49px; flex: none; display: flex; align-items: flex-start; padding-left: 34px; font-size: 20px; line-height: 49px; color: #252423; position: relative; }
.menu a { height: 46px; margin-right: 46px; letter-spacing: 0.15px; }
.menu a:first-child { margin-right: 56.5px; letter-spacing: -0.3px; }
.menu .on { font-weight: 600; border-bottom: 5px solid #117865; letter-spacing: -0.2px; color: #111; margin-right: 47px; }
.menu a:nth-child(3) { margin-right: 49px; letter-spacing: -0.3px; }
.share { margin: 6px 9px 0 auto; width: 125px; height: 36px; border: 0; border-radius: 6px; background: #117865; color: #fff; font: 17.500px "Open Sans", sans-serif; display: flex; align-items: center; padding: 0 0 0 10px; }
.share svg { width: 23px; height: 21px; }
.share span { margin: 2px 7px 0 13px; letter-spacing: -0.3px; }
.share .sc { width: 15px; height: 10px; }

/* ribbon */
.ribbon { height: 140px; flex: none; display: flex; padding-top: 5px; box-shadow: 0 2px 8px #0000002e; position: relative; z-index: 2; background: #fafafa; }
.grp { flex: none; height: 132px; border-right: 1px solid #d2d0ce; display: flex; flex-direction: column; }
.grp:last-child { border: 0; }
.grp .body { height: 115px; flex: none; display: flex; }
.grp h6 { font-size: 14px; line-height: 20px; font-weight: 400; text-align: center; color: #3b3a39; white-space: nowrap; }
.c { width: 12px; height: 12px; display: inline-block; }
.big .c { width: 11px; height: 11px; margin-left: 3px; }
.big { display: flex; flex-direction: column; align-items: center; text-align: center; padding-top: 10px; white-space: nowrap; }
.big > svg { width: 42px; height: 46px; margin-bottom: 2px; }
.big > span { line-height: 24.500px; }
.off { color: #c2c0be; }
.off .c { color: #a19f9d; }
.col { padding-top: 1px; }
.col > div { height: 36px; display: flex; align-items: center; white-space: nowrap; }
.col > div > svg:first-child { width: 26px; height: 26px; margin: -1px 4px 0 0; }
.col > div > .c { margin: 4px 0 0 7px; }
.g-clip { width: 121px; }
.g-clip .body { padding-left: 20px; gap: 12px; }
.g-clip .big { width: 44px; }
.smalls { display: flex; flex-direction: column; gap: 9px; padding-top: 5px; }
.smalls svg { width: 27px; height: 27px; }
.g-data { width: 448px; }
.g-data .big { width: 76px; margin-left: 4px; letter-spacing: -0.1px; }
.g-data .big > svg { margin-left: 7px; }
.c1 { width: 188px; margin-left: -2px; }
.c1 > div > svg:first-child { margin-right: 3px; }
.c2 { letter-spacing: -0.15px; margin-left: -1px; }
.c2 > div > svg:first-child { margin-right: 5px; }
.g-q { width: 173px; }
.tr { width: 87px; margin-left: 11px; letter-spacing: -0.55px; }
.rf { width: 62px; letter-spacing: -0.2px; }
.g-ins { width: 573px; }
.gallery { width: 380px; height: 94px; margin: 14px 0 0 18px; border: 1px solid #8a8886; background: #fff; }
.gicons { width: 356px; height: 91px; border-right: 1px solid #8a8886; display: grid; align-content: start; grid-template-columns: repeat(9, 24px); grid-auto-rows: 24px; column-gap: 15px; row-gap: 20px; padding: 11px 0 0 9px; }
.gicons svg { width: 24px; height: 24px; }
.c3 { margin-left: 6px; padding-top: 0; position: relative; letter-spacing: -0.1px; }
.c3 > div { padding: 1px 0 0 6px; width: 160px; }
.c3 > .hl { background: #f3f2f1; width: 123px; }
.tip { position: absolute; left: -64px; top: 47px; z-index: 3; height: 38px; background: #fff; border: 1px solid #e1dfdd; border-radius: 3px; box-shadow: 0 4px 14px #00000038; letter-spacing: 0.03px; color: #252423; }
.c3 > .tip { width: 253px; padding-left: 18px; height: 38px; }
.tip::before { content: ""; position: absolute; left: 117px; top: -7px; width: 13px; height: 13px; background: #fff; transform: rotate(45deg); }
.g-calc { width: 278px; }
.nvc { width: 108px; margin-left: 11px; letter-spacing: -0.2px; }
.nm { width: 72px; letter-spacing: -0.2px; }
.qm { width: 74px; letter-spacing: -0.2px; }
.g-calc .big > svg { margin-top: -1px; margin-bottom: 3px; }
.g-sens { width: 110px; }
.g-sens .big, .g-sh .big { width: 100%; }
.g-sh { width: 87px; }
.g-prep { width: 130px; }
.g-prep .big { width: 132px; }
.clip { width: 86px; overflow: hidden; margin-left: -16px; text-align: left; }
.g-prep h6 { display: flex; justify-content: flex-end; gap: 7px; padding-right: 6px; }
.up { transform: rotate(180deg); margin-top: -1px; width: 16px; height: 16px; }

/* work area */
.work { height: 732px; flex: none; display: flex; }
.rail { width: 61px; background: #f3f2f1; border-right: 1px solid #d2d0ce; padding: 16px 0 0 18px; position: relative; display: flex; flex-direction: column; gap: 33.500px; }
.rail::before { content: ""; position: absolute; left: 0; top: 0; width: 4px; height: 60px; background: #117865; }
.rail svg { width: 26px; height: 26px; }
.rail svg.wd { width: 28px; height: 28px; margin-left: -2px; }
.center { width: 1268px; display: flex; flex-direction: column; }
.canvas-row { height: 679px; display: flex; background: #fff; }
.canvas { width: 1220px; border-right: 1px solid #a8a6a4; padding: 0 16px 0 14px; }
.page { width: 1191px; height: 670px; padding: 0 0 0 3px;
  background:
    repeating-linear-gradient(#605e5c 0 3px, transparent 3px 6px) 0 0 / 3px 100% no-repeat,
    repeating-linear-gradient(#605e5c 0 3px, transparent 3px 6px) 100% 0 / 3px 100% no-repeat,
    repeating-linear-gradient(90deg, #605e5c 0 3px, transparent 3px 6px) 0 100% / 100% 3px no-repeat; }
.chart { width: 1165px; height: 482px; background: #ccc; border: 1px solid #444; border-radius: 26px; box-shadow: 5px 6px 12px 1px #00000073; }
.note { position: relative; margin: 10px 0 0 93px; width: 1033px; height: 110px; padding: 5px 0 0 5px; background: #fff; color: #4f0059; font: 700 27px/30.400px "Liberation Serif", serif; white-space: nowrap; }
.n2 { letter-spacing: 0.09px; }
.n3 { letter-spacing: 0.19px; }
.filters { width: 48px; display: flex; flex-direction: column; align-items: center; padding-top: 19px; }
.flip { width: 20px; height: 20px; transform: scaleX(-1); margin-left: 2px; }
.ff { width: 18px; height: 20px; margin: 22px -6px 0 0; }
.filters span { writing-mode: vertical-rl; font-weight: 600; font-size: 20.500px; letter-spacing: 0.4px; margin-top: 11px; }
.tabs { height: 53px; background: #f3f2f1; display: flex; border-bottom: 1px solid #d2d0ce; }
.views { width: 192px; flex: none; display: flex; align-items: flex-start; border-right: 1px solid #a19f9d; }
.v1 { width: 36px; height: 50px; margin: 0 0 0 15px; }
.v2 { width: 20px; height: 30px; margin: 7px 0 0 39px; }
.v3 { width: 42px; height: 12px; margin: 20px 0 0 30px; }
.tabs a { flex: none; width: 114.250px; height: 53px; background: #fff; border-right: 1px solid #c8c6c4; text-align: center; line-height: 55px; position: relative; letter-spacing: -0.1px; }
.tabs .on { font-weight: 600; border-bottom: 6px solid #117865; width: 116px; }
.tabs i { position: absolute; right: 7px; top: 1px; font: 600 15px/24px "Open Sans", sans-serif; }
.tabs .add { width: 60px; background: #117865; border: 0; display: flex; align-items: center; justify-content: center; }
.add svg { width: 17px; height: 17px; margin-top: -3px; }
.pane { background: #f3f2f1; border-left: 1px solid #d8d6d4; display: flex; flex-direction: column; }
.pane header { display: flex; align-items: center; height: 57px; flex: none; }
.pane h2 { font-size: 22px; line-height: 28px; font-weight: 600; }
.pane header svg { width: 19px; height: 19px; margin-top: -2px; }
.dots { width: 27px; height: 3px; background: radial-gradient(circle, #252423 1.400px, transparent 1.800px) 0 0 / 9px 3px; }
.pane header .dots { margin: -2px 9px 0 auto; }
.build { width: 271px; padding: 0 12px 0 12px; }
.build label { height: 29px; line-height: 24px; }
.vis { height: 319px; flex: none; background: #fff; border: 1px solid #8a8886; border-radius: 3px; display: grid; grid-template-columns: repeat(6, 28px); grid-auto-rows: 28px; gap: 11px 11.200px; align-content: start; padding: 9px 10px; }
.vis svg { width: 28px; height: 28px; }
.vis b { font-size: 24px; line-height: 25px; color: #2c86cc; text-align: center; letter-spacing: -1px; font-weight: 700; }
.vis .r { padding-right: 5px; }
.vis .dots { margin-top: 9px; }
.build .l2 { margin-top: 14px; height: 29px; }
.drop { height: 58px; border: 1px dashed #605e5c; border-radius: 2px; background: #fff; padding: 6px; }
.drop div { height: 44px; border: 1px solid #504e4c; border-radius: 3px; text-align: center; font-weight: 600; line-height: 43px; letter-spacing: 0.1px; }
.data { width: 271px; padding: 0 6px; }
.data header { padding: 0 6px 0 6px; }
.dsearch { margin: 11px 0 15px; height: 36px; flex: none; border: 1px solid #c8c6c4; border-bottom-color: #605e5c; border-radius: 6px; background: #fff; display: flex; align-items: center; gap: 9px; padding-left: 18px; font-size: 19px; color: #605e5c; }
.dsearch svg { width: 22px; height: 22px; margin-top: -3px; }
.dsearch span { margin-top: 2px; }
.row { height: 36px; display: flex; align-items: center; white-space: nowrap; letter-spacing: 0; }
.row .r { width: 9px; height: 17px; margin-left: 18px; }
.row .f { width: 18px; height: 18px; margin: 0 9px 0 11px; }
.rrail { width: 49px; background: #faf9f8; border-left: 1px solid #d8d6d4; display: flex; flex-direction: column; }
.rrail div { height: 48px; flex: none; display: flex; align-items: center; justify-content: center; }
.rrail .sel { background: #e1dfdd; border: 1px solid #605e5c; }
.rrail svg { width: 27px; height: 28px; }
.rrail .gear { margin-top: auto; border-top: 1px solid #d2d0ce; }
.gear svg { width: 30px; height: 29px; }

/* status bar */
.status { height: 35px; flex: none; background: #f3f2f1; border-top: 1px solid #d8d6d4; display: flex; align-items: center; padding: 2px 0 0 6px; color: #504e4c; letter-spacing: -0.1px; }
.zoom { width: 190px; height: 24px; margin: -1px 0 0 auto; }
.pct { margin: -2px 29px 0 16px; width: 34px; white-space: nowrap; font-size: 16.500px; letter-spacing: 0; color: #605e5c; }
.fit { width: 24px; height: 18px; margin-right: 27px; }

/* taskbar */
.task { height: 73px; flex: none; background: #eee; border-top: 1px solid #000; box-shadow: inset 0 2px #bdbdbd; display: flex; align-items: center; position: relative; }
.weather { width: 444px; display: flex; padding-left: 28px; gap: 2px; font-size: 17px; letter-spacing: -0.1px; }
.weather svg { width: 46px; height: 40px; margin-top: -1px; }
.weather em { font-style: normal; color: #605e5c; letter-spacing: 0.2px; }
.win { width: 36px; height: 36px; margin-right: 20px; }
.pill { width: 329px; height: 47px; border-radius: 24px; background: #fafafa; border: 2px solid #dedede; border-bottom-color: #c8c8c8; display: flex; align-items: center; font-size: 19px; color: #605e5c; letter-spacing: -0.2px; }
.pill .m { width: 23px; height: 23px; margin: 0 14px 0 15px; }
.hat { width: 70px; height: 34px; margin: 0 6px 0 auto; }
.apps { display: flex; margin-left: 2px; align-items: center; }
.apps > div { width: 66.100px; height: 58px; display: flex; align-items: center; justify-content: center; position: relative; }
.apps svg { width: 36px; height: 36px; }
.run::after { content: ""; position: absolute; left: 28.500px; bottom: -1px; width: 9px; height: 5px; border-radius: 3px; background: #8a8886; }
.apps .act { width: 56px; background: #f8f8f8; border-radius: 6px; box-shadow: 0 0 0 1px #e0e0e0; margin-left: 5px; }
.act::after { left: 16px; bottom: 0; width: 24px; background: #0078d4; }
.tray { width: 190px; height: 36px; margin-left: 113px; }
.nub { width: 3px; height: 6px; background: #222; }
.clock { margin: 0 29px 0 auto; text-align: right; font-size: 17px; letter-spacing: 0.15px; }

/* chart text */
.ct { font-size: 10.600px; fill: #605e5c; }
.mid { text-anchor: middle; }
.end { text-anchor: end; }
.ax { font-size: 12px; font-weight: 600; fill: #252423; text-anchor: middle; }
.title { font-size: 16.500px; font-weight: 700; fill: #1f1e1d; }
.lg { font-size: 11.500px; font-weight: 700; fill: #605e5c; }
.grid { stroke: #c2c2c2; stroke-dasharray: 1 5; }
```
FILE: chart.js
```js
const data = [
  ["Services", 2.89, 2.81, 0.20], ["Legal", 2.24, 3.25, 0.33], ["Product|Management", 2.79, 2.94, 0.04],
  ["Business|Development", 2.84, 2.66, 0.15], ["Support", 2.15, 3.16, 0.30], ["Training", 2.64, 2.60, 0.25],
  ["Engineering", 2.62, 2.38, 0.39], ["Sales", 2.24, 2.78, 0.36], ["Human|Resources", 2.48, 2.45, 0.28],
  ["Accounting", 1.97, 2.76, 0.21], ["Marketing", 2.45, 2.27, 0.11], ["Research and|Development", 2.17, 1.97, 0.39]
];
const unlabelled = ["Services", "Training", "Human|Resources"];
const colors = ["#118dff", "#12239e", "#e66c37"];
const base = 652.7, unit = 97.5, barW = 22.65, pitch = 86.05, left = 179.6;
let out = "";
for (let v = 0; v <= 3; v += 0.5) {
  const y = base - v * unit;
  out += `<path class="grid" d="M144 ${y}H1228"/><text class="ct end" x="136" y="${y + 4}" textLength="24" lengthAdjust="spacingAndGlyphs">${v.toFixed(1)}M</text>`;
}
let labels = "";
data.forEach(([name, ...vals], i) => {
  const x0 = left + i * pitch;
  vals.forEach((v, j) => {
    const x = x0 + j * barW, y = base - v * unit;
    out += `<rect x="${x}" y="${y}" width="${barW}" height="${v * unit}" fill="${colors[j]}"/>`;
    if (!(j === 1 && unlabelled.includes(name))) labels += `<text class="ct mid" x="${x + barW / 2}" y="${y - 8}">${v.toFixed(2)}M</text>`;
  });
  name.split("|").forEach((t, k) => { labels += `<text class="ct mid" x="${x0 + 34.5}" y="${675 + k * 15}">${t}</text>`; });
});
out += labels;
out += `<text class="title" x="483" y="267.500" textLength="357">Sum of Salary by Department and Gender</text>`;
out += `<text class="lg" x="91" y="296" textLength="42">Gender</text>`;
[["Female", 146, 40], ["Male", 204, 27.5], ["Other", 249, 35.5]].forEach(([t, cx, w], i) => {
  out += `<circle cx="${cx}" cy="291.700" r="5" fill="${colors[i]}"/><text class="lg" x="${cx + 6.5}" y="296" textLength="${w}">${t}</text>`;
});
out += `<text class="ax" x="687" y="705" textLength="70">Department</text><text class="ax" transform="translate(104 483) rotate(-90)" textLength="81">Sum of Salary</text>`;
document.getElementById("chart").innerHTML = out;
```
